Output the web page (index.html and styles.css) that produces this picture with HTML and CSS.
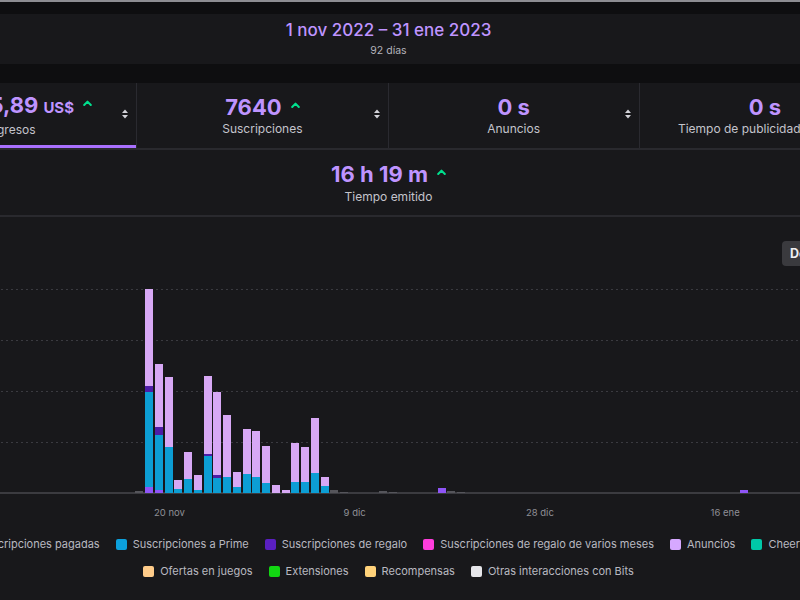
FILE: index.html
```html
<!DOCTYPE html>
<html lang="es">
<head>
<meta charset="utf-8">
<title>Análisis del canal</title>
<link rel="stylesheet" href="styles.css">
</head>
<body>
<div class="topline"></div>
<div class="page">
  <header class="range">
    <div class="range-dates">1 nov 2022 – 31 ene 2023</div>
    <div class="range-days">92 días</div>
  </header>

  <section class="stats">
    <div class="stat active">
      <div class="stat-body">
        <div class="value">12.345,89 <span class="unit">US$</span><svg class="up" viewBox="0 0 9 6"><polyline points="1.2,5 4.5,1.6 7.8,5"/></svg></div>
        <div class="label">Ingresos</div>
      </div>
      <svg class="sort" viewBox="0 0 6 10"><polygon points="0,4 3,0.5 6,4"/><polygon points="0,6 3,9.5 6,6"/></svg>
    </div>
    <div class="stat">
      <div class="stat-body">
        <div class="value">7640<svg class="up" viewBox="0 0 9 6"><polyline points="1.2,5 4.5,1.6 7.8,5"/></svg></div>
        <div class="label">Suscripciones</div>
      </div>
      <svg class="sort" viewBox="0 0 6 10"><polygon points="0,4 3,0.5 6,4"/><polygon points="0,6 3,9.5 6,6"/></svg>
    </div>
    <div class="stat">
      <div class="stat-body">
        <div class="value">0 s</div>
        <div class="label">Anuncios</div>
      </div>
      <svg class="sort" viewBox="0 0 6 10"><polygon points="0,4 3,0.5 6,4"/><polygon points="0,6 3,9.5 6,6"/></svg>
    </div>
    <div class="stat">
      <div class="stat-body">
        <div class="value">0 s</div>
        <div class="label">Tiempo de publicidad por hora</div>
      </div>
      <svg class="sort" viewBox="0 0 6 10"><polygon points="0,4 3,0.5 6,4"/><polygon points="0,6 3,9.5 6,6"/></svg>
    </div>
  </section>

  <section class="stat-extra">
    <div class="stat-body">
      <div class="value">16 h 19 m<svg class="up" viewBox="0 0 9 6"><polyline points="1.2,5 4.5,1.6 7.8,5"/></svg></div>
      <div class="label">Tiempo emitido</div>
    </div>
  </section>

  <section class="chart">
    <div class="toolbar"><button class="dl">Descargar</button></div>
    <div class="plot">
      <div class="gridlines">
        <div class="gl"></div><div class="gl"></div><div class="gl"></div><div class="gl"></div>
        <div class="base"></div>
      </div>
      <div class="bars">
        <div class="bar" style="grid-column:17"><i class="s other" style="height:2px"></i></div>
        <div class="bar" style="grid-column:18"><i class="s paid" style="height:6px"></i><i class="s prime" style="height:95px"></i><i class="s gift" style="height:6px"></i><i class="s ads" style="height:97px"></i></div>
        <div class="bar" style="grid-column:19"><i class="s paid" style="height:3px"></i><i class="s prime" style="height:55px"></i><i class="s gift" style="height:8px"></i><i class="s ads" style="height:63px"></i></div>
        <div class="bar" style="grid-column:20"><i class="s prime" style="height:46px"></i><i class="s ads" style="height:70px"></i></div>
        <div class="bar" style="grid-column:21"><i class="s prime" style="height:4px"></i><i class="s ads" style="height:9px"></i></div>
        <div class="bar" style="grid-column:22"><i class="s prime" style="height:14px"></i><i class="s ads" style="height:27px"></i></div>
        <div class="bar" style="grid-column:23"><i class="s prime" style="height:3px"></i><i class="s ads" style="height:15px"></i></div>
        <div class="bar" style="grid-column:24"><i class="s prime" style="height:37px"></i><i class="s gift" style="height:2px"></i><i class="s ads" style="height:78px"></i></div>
        <div class="bar" style="grid-column:25"><i class="s prime" style="height:15px"></i><i class="s gift" style="height:3px"></i><i class="s ads" style="height:83px"></i></div>
        <div class="bar" style="grid-column:26"><i class="s prime" style="height:16px"></i><i class="s ads" style="height:62px"></i></div>
        <div class="bar" style="grid-column:27"><i class="s prime" style="height:6px"></i><i class="s ads" style="height:15px"></i></div>
        <div class="bar" style="grid-column:28"><i class="s prime" style="height:19px"></i><i class="s ads" style="height:45px"></i></div>
        <div class="bar" style="grid-column:29"><i class="s prime" style="height:16px"></i><i class="s ads" style="height:46px"></i></div>
        <div class="bar" style="grid-column:30"><i class="s prime" style="height:10px"></i><i class="s ads" style="height:37px"></i></div>
        <div class="bar" style="grid-column:31"><i class="s ads" style="height:8px"></i></div>
        <div class="bar" style="grid-column:32"><i class="s ads" style="height:3px"></i></div>
        <div class="bar" style="grid-column:33"><i class="s prime" style="height:11px"></i><i class="s ads" style="height:39px"></i></div>
        <div class="bar" style="grid-column:34"><i class="s prime" style="height:11px"></i><i class="s ads" style="height:35px"></i></div>
        <div class="bar" style="grid-column:35"><i class="s prime" style="height:20px"></i><i class="s ads" style="height:55px"></i></div>
        <div class="bar" style="grid-column:36"><i class="s prime" style="height:7px"></i><i class="s ads" style="height:9px"></i></div>
        <div class="bar" style="grid-column:37"><i class="s other" style="height:3px"></i></div>
        <div class="bar" style="grid-column:38"><i class="s other" style="height:1px"></i></div>
        <div class="bar" style="grid-column:42"><i class="s other" style="height:2px"></i></div>
        <div class="bar" style="grid-column:43"><i class="s other" style="height:1px"></i></div>
        <div class="bar" style="grid-column:48"><i class="s paid" style="height:5px"></i></div>
        <div class="bar" style="grid-column:49"><i class="s other" style="height:2px"></i></div>
        <div class="bar" style="grid-column:50"><i class="s other" style="height:1px"></i></div>
        <div class="bar" style="grid-column:79"><i class="s paid" style="height:3px"></i></div>
      </div>
    </div>
    <div class="axis">
      <span class="tick" style="grid-column:19 / span 3">20 nov</span>
      <span class="tick" style="grid-column:38 / span 3">9 dic</span>
      <span class="tick" style="grid-column:57 / span 3">28 dic</span>
      <span class="tick" style="grid-column:76 / span 3">16 ene</span>
    </div>
    <div class="legend">
      <div class="legend-row wide">
        <span class="item"><i class="sw c-paid"></i>Suscripciones pagadas</span>
        <span class="item"><i class="sw c-prime"></i>Suscripciones a Prime</span>
        <span class="item"><i class="sw c-gift"></i>Suscripciones de regalo</span>
        <span class="item"><i class="sw c-multi"></i>Suscripciones de regalo de varios meses</span>
        <span class="item"><i class="sw c-ads"></i>Anuncios</span>
        <span class="item"><i class="sw c-cheer"></i>Cheers</span>
      </div>
      <div class="legend-row">
        <span class="item"><i class="sw c-offers"></i>Ofertas en juegos</span>
        <span class="item"><i class="sw c-ext"></i>Extensiones</span>
        <span class="item"><i class="sw c-rewards"></i>Recompensas</span>
        <span class="item"><i class="sw c-bits"></i>Otras interacciones con Bits</span>
      </div>
    </div>
  </section>
</div>
</body>
</html>
```

FILE: styles.css
```css
html, body {
  margin: 0;
  padding: 0;
}
body {
  background: #0e0e10;
  font-family: "Inter", "Noto Sans", sans-serif;
  color: #adadb8;
  overflow: hidden;
  width: 800px;
  height: 600px;
}
.topline {
  height: 2px;
  background: #8d8d92;
  margin-bottom: 12px;
}
.page {
  width: 1005px;
  margin-left: -114px;
}
.range {
  height: 50px;
  background: #18181b;
  display: flex;
  flex-direction: column;
  align-items: center;
  padding-top: 5px;
  box-sizing: border-box;
}
.range-dates {
  font-size: 17px;
  line-height: 22px;
  font-weight: 500;
  color: #bf94ff;
}
.range-days {
  font-size: 10.5px;
  line-height: 14px;
  color: #b4b4bc;
  margin-top: 3px;
}
.stats {
  margin-top: 19px;
  display: grid;
  grid-template-columns: repeat(4, 1fr);
  background: #18181b;
  border-bottom: 2px solid #29292e;
}
.stat {
  height: 65px;
  display: grid;
  grid-template-columns: 1fr auto 1fr;
  align-items: center;
  border-right: 1px solid #2a2a30;
  box-sizing: border-box;
}
.stat.active {
  box-shadow: inset 0 -3px 0 #a970ff;
}
.stat-body {
  grid-column: 2;
  display: flex;
  flex-direction: column;
  align-items: center;
  gap: 2px;
}
.value {
  display: flex;
  align-items: baseline;
  font-size: 22px;
  line-height: 24px;
  font-weight: 700;
  color: #bf94ff;
  white-space: nowrap;
}
.unit {
  font-size: 15px;
  margin-left: 5px;
}
.up {
  width: 9px;
  height: 6px;
  margin-left: 9px;
  align-self: flex-start;
  margin-top: 7px;
}
.up polyline {
  fill: none;
  stroke: #00e08e;
  stroke-width: 2;
  stroke-linecap: round;
  stroke-linejoin: round;
}
.label {
  font-size: 12px;
  line-height: 16px;
  color: #c4c4cc;
  white-space: nowrap;
}
.sort {
  grid-column: 3;
  justify-self: end;
  margin-right: 8px;
  width: 6px;
  height: 10px;
  margin-top: -3px;
}
.sort polygon {
  fill: #d2d2d8;
}
.stat-extra {
  height: 65px;
  background: #18181b;
  display: flex;
  align-items: center;
  justify-content: center;
  border-bottom: 2px solid #29292e;
}
.stat-extra .stat-body {
  gap: 3px;
  margin-top: 2px;
}
.chart {
  background: #18181b;
  height: 400px;
}
.toolbar {
  height: 72px;
  padding-top: 24px;
  padding-left: 896px;
  box-sizing: border-box;
}
.dl {
  height: 25px;
  padding: 0 10px 0 8px;
  border: 0;
  border-radius: 4px;
  background: #3a3a3e;
  color: #efeff1;
  font-family: "Inter", sans-serif;
  font-size: 12.5px;
  font-weight: 700;
}
.plot {
  display: grid;
}
.gridlines, .bars {
  grid-area: 1 / 1;
}
.gridlines {
  display: flex;
  flex-direction: column;
}
.gl {
  height: 51px;
  background-image: repeating-linear-gradient(90deg, #3a3a40 0 2px, transparent 2px 5px);
  background-size: 100% 1px;
  background-repeat: no-repeat;
}
.base {
  height: 2px;
  margin-top: -1px;
  background: #3b3b40;
}
.bars {
  display: grid;
  grid-template-columns: repeat(92, 9.75px);
  align-items: end;
  height: 204px;
  margin-left: 93.25px;
}
.bar {
  grid-row: 1;
  width: 8px;
  display: flex;
  flex-direction: column-reverse;
}
.s {
  display: block;
}
.paid { background: #8f55f7; }
.prime { background: #0c9ed4; }
.gift { background: #4d1ca6; }
.ads { background: #d7a8f5; }
.other { background: #55555b; }
.axis {
  display: grid;
  grid-template-columns: repeat(92, 9.75px);
  margin-left: 93.25px;
  padding-top: 13px;
  height: 26px;
  box-sizing: border-box;
}
.tick {
  grid-row: 1;
  justify-self: center;
  white-space: nowrap;
  font-size: 9.5px;
  line-height: 12px;
  color: #8f8f96;
}
.legend {
  display: flex;
  flex-direction: column;
  align-items: center;
  gap: 11px;
  padding-top: 16px;
}
.legend-row {
  display: flex;
  gap: 16px;
  white-space: nowrap;
}
.legend-row.wide {
  padding-right: 10px;
}
.item {
  display: flex;
  align-items: center;
  gap: 6px;
  font-size: 11px;
  line-height: 16px;
  color: #b8b8c0;
}
.sw {
  width: 11px;
  height: 11px;
  border-radius: 2px;
  display: block;
}
.c-paid { background: #9147ff; }
.c-prime { background: #0ca0dc; }
.c-gift { background: #5a1fc0; }
.c-multi { background: #ff3ddc; }
.c-ads { background: #d6a8ff; }
.c-cheer { background: #00c8a8; }
.c-offers { background: #ffcc8a; }
.c-ext { background: #12d612; }
.c-rewards { background: #ffd27a; }
.c-bits { background: #e6e6ea; }
```
